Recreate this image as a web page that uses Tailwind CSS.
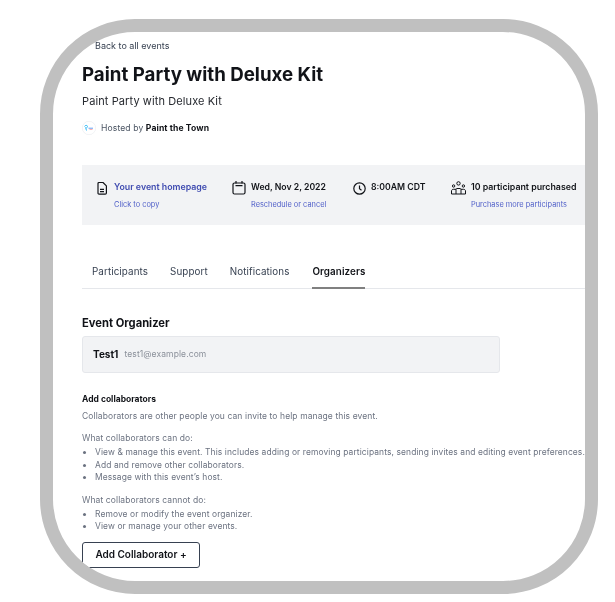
<!DOCTYPE html>
<html lang="en">
<head>
    <meta charset="UTF-8">
    <meta name="viewport" content="width=device-width, initial-scale=1.0">
    <title>Paint Party with Deluxe Kit</title>
    <script src="https://cdn.jsdelivr.net/npm/@tailwindcss/browser@4"></script>
</head>
<body class="bg-white font-['Inter',sans-serif] w-[615px] h-[602px] overflow-hidden pl-[40px] pt-[19px]">

    <!-- Rounded frame -->
    <div class="w-[558px] h-[575px] border-[13px] border-[#c0c0c0] rounded-[95px] overflow-hidden bg-white pl-[29px] blur-[0.3px]">

        <a class="block ml-[13px] mt-[8px] text-[9px] leading-[11px] text-[#374151]">Back to all events</a>
        <h1 class="mt-[12px] text-[18.7px] leading-[24px] font-bold text-[#111318]">Paint Party with Deluxe Kit</h1>
        <p class="mt-[7px] text-[11px] leading-[14px] tracking-[0.1px] text-[#26292f]">Paint Party with Deluxe Kit</p>

        <div class="mt-[13px] flex items-center h-[14px]">
            <svg class="w-[14px] h-[14px]" viewBox="0 0 14 14">
                <circle cx="7" cy="7" r="6.7" fill="#fff" stroke="#e5e7eb" stroke-width="0.5"/>
                <path d="M2.5 5.5C3 4 5.5 4 5.5 5.5S4 7 3.6 6.6L4.5 9.5" fill="none" stroke="#38bdf8" stroke-width="1"/>
                <path d="M6.5 7.2h4.5" stroke="#60a5fa" stroke-width="1"/>
                <path d="M7.5 8.4h3" stroke="#f87171" stroke-width="0.6"/>
            </svg>
            <p class="ml-[5px] text-[8.6px] tracking-[0.1px] text-[#4b5563]">Hosted by <span class="font-bold text-[#111318]">Paint the Town</span></p>
        </div>

        <!-- Event info bar -->
        <div class="mt-[30px] h-[60px] bg-[#f2f3f5] flex pt-[16px]">
            <div class="w-[150px] flex pl-[15px]">
                <svg class="w-[10px] h-[13px] mt-[1px]" viewBox="0 0 10 13" fill="none" stroke="#111318" stroke-width="1.2" stroke-linejoin="round">
                    <path d="M1 1.5a1 1 0 0 1 1-1h4l3.4 3.4V11a1.2 1.2 0 0 1-1.2 1.2H2A1 1 0 0 1 1 11.2Z"/>
                    <path d="M3 7.4h4M3 9.6h4"/>
                </svg>
                <div class="ml-[7px]">
                    <p class="text-[8.8px] leading-[12px] font-semibold text-[#3f4bb0]">Your event homepage</p>
                    <p class="mt-[7px] text-[7.4px] leading-[10px] text-[#5261c9]">Click to copy</p>
                </div>
            </div>
            <div class="w-[121px] flex">
                <svg class="w-[14px] h-[14px]" viewBox="0 0 14 14" fill="none" stroke="#111318" stroke-width="1.2">
                    <rect x="1" y="2" width="12" height="11" rx="1.5"/>
                    <path d="M3.5 4.7h7M4 0v2.5M10 0v2.5"/>
                </svg>
                <div class="ml-[5px]">
                    <p class="text-[8.7px] leading-[12px] font-semibold text-[#111318]">Wed, Nov 2, 2022</p>
                    <p class="mt-[7px] text-[7.4px] leading-[10px] text-[#5261c9]">Reschedule or cancel</p>
                </div>
            </div>
            <div class="w-[98px] flex">
                <svg class="w-[13px] h-[13px] mt-[1px]" viewBox="0 0 13 13" fill="none" stroke="#111318" stroke-width="1.2">
                    <circle cx="6.5" cy="6.5" r="5.7"/>
                    <path d="M6.5 3.4v3.4l2 1.4"/>
                </svg>
                <p class="ml-[5px] text-[8.7px] leading-[12px] font-semibold text-[#111318]">8:00AM CDT</p>
            </div>
            <div class="flex">
                <svg class="w-[15px] h-[14px]" viewBox="0 0 15 14" fill="none" stroke="#111318" stroke-width="1">
                    <circle cx="7.5" cy="2.4" r="1.7"/>
                    <circle cx="2.6" cy="5" r="1.2"/>
                    <circle cx="12.4" cy="5" r="1.2"/>
                    <path d="M5 13V8.5c0-.6.4-1 1-1h3c.6 0 1 .4 1 1V13"/>
                    <path d="M.5 13v-3c0-1 .8-1.7 1.8-1.7H5M14.5 13v-3c0-1-.8-1.7-1.8-1.7H10M.5 13h14"/>
                </svg>
                <div class="ml-[5px]">
                    <p class="text-[8.8px] leading-[12px] font-semibold text-[#111318] whitespace-nowrap">10 participant purchased</p>
                    <p class="mt-[7px] text-[7.4px] leading-[10px] text-[#5261c9] whitespace-nowrap">Purchase more participants</p>
                </div>
            </div>
        </div>

        <!-- Tabs -->
        <div class="mt-[29px] h-[35px] flex pl-[10px] border-b border-[#e5e7eb] text-[9.8px] text-[#374151] tracking-[0.1px]">
            <a class="pt-[11px]">Participants</a>
            <a class="pt-[11px] ml-[22px]">Support</a>
            <a class="pt-[11px] ml-[22px]">Notifications</a>
            <a class="pt-[11px] ml-[23px] h-[35px] font-semibold text-[#111318] border-b-2 border-[#808080]">Organizers</a>
        </div>

        <h2 class="mt-[27px] text-[11.2px] leading-[14px] font-bold text-[#111318]">Event Organizer</h2>
        <div class="mt-[6px] w-[418px] h-[37px] bg-[#f2f3f5] border border-[#e5e7eb] rounded-[3px] flex items-center pl-[10px]">
            <span class="text-[10px] font-bold text-[#111318]">Test1</span>
            <span class="ml-[6px] text-[8.5px] tracking-[0.1px] text-[#8b909a]">test1@example.com</span>
        </div>

        <h3 class="mt-[21px] text-[8.5px] leading-[10px] font-bold text-[#111318]">Add collaborators</h3>
        <p class="mt-[7px] text-[8.5px] leading-[10px] tracking-[0.1px] text-[#6b7280]">Collaborators are other people you can invite to help manage this event.</p>

        <p class="mt-[12px] text-[8.5px] leading-[10px] tracking-[0.1px] text-[#6b7280]">What collaborators can do:</p>
        <ul class="mt-[3px] list-disc pl-[13px] text-[8.45px] leading-[12.5px] tracking-[0.1px] text-[#6b7280] whitespace-nowrap">
            <li>View &amp; manage this event. This includes adding or removing participants, sending invites and editing event preferences.</li>
            <li>Add and remove other collaborators.</li>
            <li>Message with this event’s host.</li>
        </ul>

        <p class="mt-[11px] text-[8.5px] leading-[10px] tracking-[0.1px] text-[#6b7280]">What collaborators cannot do:</p>
        <ul class="mt-[3px] list-disc pl-[13px] text-[8.45px] leading-[12.5px] tracking-[0.1px] text-[#6b7280] whitespace-nowrap">
            <li>Remove or modify the event organizer.</li>
            <li>View or manage your other events.</li>
        </ul>

        <button class="mt-[9px] w-[118px] h-[26px] bg-white border border-[#374151] rounded-[3px] text-[10px] font-semibold text-[#111318]">Add Collaborator +</button>
    </div>

</body>
</html>
